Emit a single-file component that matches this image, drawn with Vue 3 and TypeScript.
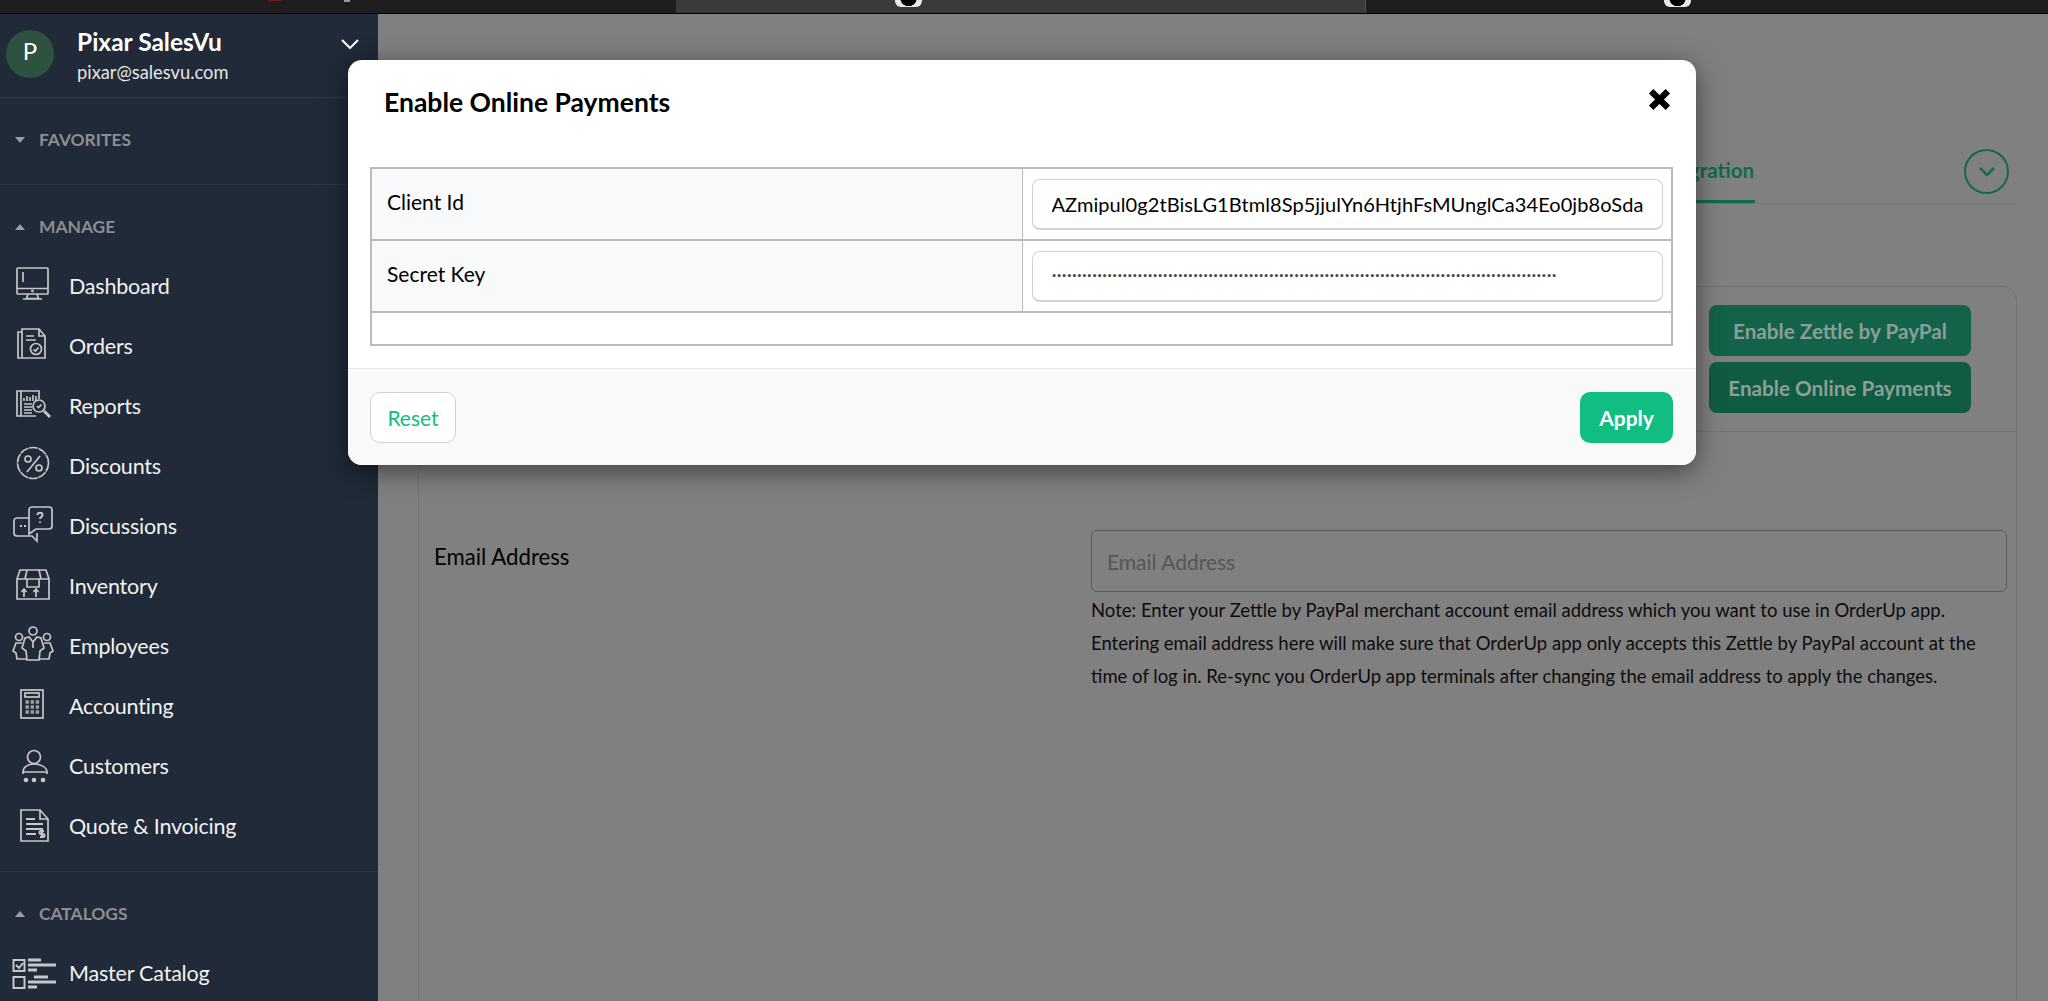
<script setup lang="ts">
interface MenuItem { label: string; svg: string }

const menu: MenuItem[] = [
  { label: 'Dashboard', svg: '<rect x="5" y="4" width="31" height="26" rx="1"/><path d="M5 24.5h31M11 8v10M16 30l-1.500 4.500h12L25 30M11 35h19"/><circle cx="20.500" cy="27" r=".6"/>' },
  { label: 'Orders', svg: '<path d="M10 5h17l6 7v22H10zM27 5v7h6M10 8H6v26l3 0M14 12h8M14 16h10"/><circle cx="24" cy="25" r="5.500"/><path d="M21.500 25.500l2 1.500 3-3.500"/>' },
  { label: 'Reports', svg: '<path d="M27 15V7H5v25h19"/><path d="M9 7v25M12 17v-3M15 17v-5M18 17v-4M21 17v-6M24 17v-5M12 20h8M12 23h8M12 26h8M12 29h8"/><circle cx="27" cy="22" r="6"/><path d="M25 22l1.500 1.500 3-3"/><path stroke-width="2.800" d="M32 27l6 6"/>' },
  { label: 'Discounts', svg: '<circle cx="21" cy="19" r="15.500" stroke-dasharray="9 .8"/><path d="M28 12L15 28"/><circle cx="16" cy="15" r="3"/><circle cx="27" cy="24" r="3"/>' },
  { label: 'Discussions', svg: '<path d="M20 3h17a3 3 0 0 1 3 3v16a3 3 0 0 1-3 3H24l-7 5V6a3 3 0 0 1 3-3z"/><path d="M17 14H5a3 3 0 0 0-3 3v12a3 3 0 0 0 3 3h15l5 5V29"/><path stroke-width="2" d="M25.500 11c0-3 5-3 5 0 0 2-2.500 2-2.500 4M28 17.500v1.500M8 22h2M12 22h2"/>' },
  { label: 'Inventory', svg: '<path d="M5 15L8 6h26l3 9v20H5zM5 15h32M15 6l-2 9M27 6l2 9M15 15v8h12v-8M12 33v-7M9.500 28l2.500-3 2.500 3M24 33v-7M21.500 28l2.500-3 2.500 3"/>' },
  { label: 'Employees', svg: '<circle cx="21" cy="7" r="4"/><circle cx="7" cy="13" r="3.500"/><circle cx="35" cy="13" r="3.500"/><path d="M13 14l4-1 4 5 4-5 4 1 3 10-4 3-1 9H15l-1-9-4-3zM21 18v6"/><path d="M10 19H4l-3 8 3 2 1 6h10M32 19h6l3 8-3 2-1 6H27"/>' },
  { label: 'Accounting', svg: '<rect x="9" y="6" width="22" height="28"/><rect x="13" y="9" width="14" height="4"/><path stroke-width="3.400" stroke-dasharray="3.400 1.700" d="M13.500 18h14M13.500 23h14M13.500 28h14" opacity=".75"/>' },
  { label: 'Customers', svg: '<circle cx="22" cy="13" r="6.500"/><path d="M11 28c0-5 5-8 11-8s13 3 13 8zM11 28v2M35 28v2"/><circle cx="14" cy="36" r="1.500" fill="#c9ccd0"/><circle cx="22" cy="36" r="1.500" fill="#c9ccd0"/><circle cx="31" cy="36" r="1.500" fill="#c9ccd0"/>' },
  { label: 'Quote & Invoicing', svg: '<path d="M9 6h19l8 9v22H9zM28 6v9h8"/><path stroke-width="2" d="M14 15h9M14 20h17M14 25h17M14 30h10M30 28v6M28 33h3a1 1 0 0 0 0-3h-2a1 1 0 0 1 0-3h3"/>' },
]

const catalogSvg = '<path stroke-width="2" d="M1.500 9h11v11h-11zM1.500 26h11v11h-11zM4 14l3 3 4-5"/><path stroke-width="3" d="M16 9h13M16 14h28M16 19h9M22 26h14M16 31h28M16 36h9"/>'

const clientId = 'AZmipul0g2tBisLG1Btml8Sp5jjulYn6HtjhFsMUnglCa34Eo0jb8oSda'
const secret = '·'.repeat(100)
</script>

<template>
  <div class="page">
    <header class="browser">
      <div class="browser-tab browser-tab--active"><span class="favicon"></span></div>
      <div class="browser-tab browser-tab--last"><span class="favicon"></span></div>
    </header>

    <div class="app">
      <aside class="sidebar">
        <div class="profile">
          <div class="avatar">P</div>
          <div class="who">
            <div class="name">Pixar SalesVu</div>
            <div class="email">pixar@salesvu.com</div>
          </div>
          <svg class="chevron" width="18" height="12" viewBox="0 0 18 12"><path d="M1 2l8 8 8-8" /></svg>
        </div>

        <section class="group group--fav">
          <h3 class="group-title"><i class="caret caret--down"></i>FAVORITES</h3>
        </section>

        <section class="group group--manage">
          <h3 class="group-title"><i class="caret"></i>MANAGE</h3>
          <ul class="menu">
            <li v-for="item in menu" :key="item.label" class="menu-item">
              <svg class="icon" width="44" height="44" viewBox="0 0 44 44" v-html="item.svg"></svg>
              <span>{{ item.label }}</span>
            </li>
          </ul>
        </section>

        <section class="group group--catalogs">
          <h3 class="group-title"><i class="caret"></i>CATALOGS</h3>
          <ul class="menu">
            <li class="menu-item">
              <svg class="icon" width="44" height="44" viewBox="0 0 44 44" v-html="catalogSvg"></svg>
              <span>Master Catalog</span>
            </li>
          </ul>
        </section>
      </aside>

      <main class="main">
        <div class="tabs">
          <div class="tab">Zettle by PayPal Integration</div>
          <button class="round" type="button" aria-label="More">
            <svg width="20" height="12" viewBox="0 0 20 12"><path d="M3 2l7 7 7-7" /></svg>
          </button>
        </div>

        <div class="card">
          <div class="card-head">
            <button class="green green--light" type="button">Enable Zettle by PayPal</button>
            <button class="green" type="button">Enable Online Payments</button>
          </div>
          <div class="form-row">
            <label class="form-label">Email Address</label>
            <div class="form-field">
              <input class="email-input" type="text" placeholder="Email Address" />
              <p class="note">Note: Enter your Zettle by PayPal merchant account email address which you want to use in OrderUp app. Entering email address here will make sure that OrderUp app only accepts this Zettle by PayPal account at the time of log in. Re-sync you OrderUp app terminals after changing the email address to apply the changes.</p>
            </div>
          </div>
        </div>
      </main>

      <div class="modal" role="dialog">
        <div class="modal-head">
          <h2 class="modal-title">Enable Online Payments</h2>
          <svg class="close" width="25" height="25" viewBox="0 0 24 24"><path d="M4 4l16 16M20 4L4 20" /></svg>
        </div>
        <div class="modal-body">
          <table class="grid">
            <tbody>
              <tr class="row">
                <th>Client Id</th>
                <td><input class="field" type="text" :value="clientId" /></td>
              </tr>
              <tr class="row">
                <th>Secret Key</th>
                <td><input class="field field--secret" type="text" :value="secret" /></td>
              </tr>
              <tr class="row row--empty"><td colspan="2"></td></tr>
            </tbody>
          </table>
        </div>
        <div class="modal-foot">
          <button class="btn btn--reset" type="button">Reset</button>
          <button class="btn btn--apply" type="button">Apply</button>
        </div>
      </div>
    </div>
  </div>
</template>

<style>
html, body { margin: 0; background: #808080; overflow: hidden; }
</style>

<style scoped>
* { box-sizing: border-box; }
.page {
  width: 2048px;
  height: 1001px;
  overflow: hidden;
  display: flex;
  flex-direction: column;
  font-family: Lato, "Liberation Sans", sans-serif;
  color: #000;
}

.browser {
  flex: 0 0 14px;
  display: flex;
  padding-left: 676px;
  background:
    linear-gradient(#7a1c1c, #7a1c1c) 268px 0 / 13px 1px no-repeat,
    linear-gradient(#9a9a9a, #9a9a9a) 344px 0 / 6px 2px no-repeat,
    #1e1e1e;
  border-bottom: 1px solid #000;
  overflow: hidden;
}
.browser-tab {
  width: 690px;
  padding-left: 219px;
}
.browser-tab--active {
  background: #3a3a3a;
  border-right: 1px solid #555;
}
.browser-tab--last { padding-left: 298px; width: 682px; }
.favicon {
  display: block;
  width: 27px;
  height: 7px;
  background: radial-gradient(circle at 50% -2px, #000 8px, #e8e8e8 8.5px);
  border-radius: 0 0 6px 6px;
}

.app {
  position: relative;
  flex: 1;
  min-height: 0;
  display: flex;
}

/* sidebar */
.sidebar {
  flex: 0 0 378px;
  background: #202a38;
  color: #fff;
  overflow: hidden;
}
.profile {
  height: 84px;
  display: flex;
  align-items: flex-start;
  padding: 16px 19px 0 6px;
  border-bottom: 1px solid #2b3a49;
}
.avatar {
  flex: 0 0 48px;
  height: 48px;
  border-radius: 50%;
  background: #2d5240;
  text-align: center;
  font-size: 24px;
  line-height: 42px;
}
.who { flex: 1; padding-left: 23px; margin-top: -3px; }
.name { font-size: 24.500px; font-weight: 700; line-height: 30px; }
.email { font-size: 18.300px; line-height: 30px; color: #e6e6e6; }
.chevron { margin-top: 8px; }
.chevron path { fill: none; stroke: #fff; stroke-width: 2; }

.group { border-bottom: 1px solid #2b3a49; }
.group--fav { height: 87px; padding-top: 28px; }
.group--manage { padding: 28px 0 15px; }
.group--catalogs { padding-top: 28px; border-bottom: 0; }
.group-title {
  margin: 0;
  padding-left: 15px;
  display: flex;
  align-items: center;
  font-size: 17.400px;
  line-height: 28px;
  font-weight: 700;
  color: #8b8e92;
}
.caret {
  width: 0;
  height: 0;
  margin-right: 14px;
  border-left: 5.500px solid transparent;
  border-right: 5.500px solid transparent;
  border-bottom: 6px solid #9b9ea2;
}
.caret--down { border-bottom: 0; border-top: 6px solid #9b9ea2; }
.menu { list-style: none; margin: 15px 0 0; padding: 0; }
.menu-item {
  height: 60px;
  display: flex;
  align-items: center;
  gap: 13px;
  padding-left: 12px;
  font-size: 21.500px;
  letter-spacing: -0.2px;
  color: #f2f2f2;
}
.icon {
  flex: 0 0 44px;
  fill: none;
  stroke: #c4c7cb;
  stroke-width: 1.700;
}

/* page behind the dialog */
.main {
  flex: 1;
  min-width: 0;
  background: #808080;
  padding: 0 31px 0 40px;
}
.tabs {
  height: 190px;
  display: flex;
  align-items: flex-end;
  justify-content: flex-end;
  border-bottom: 1px solid #737373;
}
.tab {
  height: 54px;
  padding: 0 1px;
  font-size: 20.500px;
  font-weight: 700;
  line-height: 42px;
  color: #0f6a4c;
  border-bottom: 3px solid #0f6a4c;
}
.round {
  width: 45px;
  height: 45px;
  margin: 0 8px 9px 209px;
  padding: 0;
  border: 2.500px solid #12694c;
  border-radius: 50%;
  background: none;
  display: flex;
  align-items: center;
  justify-content: center;
}
.round path { fill: none; stroke: #12694c; stroke-width: 2.500; }
.card {
  margin-top: 82px;
  height: 900px;
  border: 1px solid #737373;
  border-radius: 14px;
}
.card-head {
  height: 145px;
  padding: 18px 45px 0 0;
  display: flex;
  flex-direction: column;
  align-items: flex-end;
  gap: 6px;
  border-bottom: 1px solid #737373;
}
.green {
  width: 262px;
  height: 51px;
  border: 0;
  border-radius: 8px;
  background: #105c42;
  color: #8f9f97;
  font: 700 20.700px Lato, "Liberation Sans", sans-serif;
}
.green--light { background: #126349; color: #8c9e95; }
.form-row {
  display: flex;
  padding: 98px 9px 0 15px;
}
.form-label {
  flex: 0 0 657px;
  font-size: 22.200px;
  line-height: 54px;
}
.form-field { flex: 1; }
.email-input {
  width: 100%;
  height: 62px;
  padding: 0 15px;
  border: 1px solid #585858;
  border-radius: 6px;
  background: transparent;
  font: 21px Lato, "Liberation Sans", sans-serif;
}
.email-input::placeholder { color: #565656; opacity: 1; }
.note {
  margin: 2px 0 0;
  font-size: 18.500px;
  line-height: 33px;
  color: #0c0c0c;
}

/* dialog */
.modal {
  position: absolute;
  left: 348px;
  top: 46px;
  width: 1348px;
  height: 405px;
  display: flex;
  flex-direction: column;
  background: #fff;
  border-radius: 14px;
  box-shadow: 0 6px 26px rgba(0, 0, 0, 0.5);
}
.modal-head {
  height: 107px;
  display: flex;
  justify-content: space-between;
  align-items: flex-start;
  padding: 23px 24px 0 36px;
}
.modal-title {
  margin: 0;
  font-size: 26.500px;
  line-height: 38px;
  font-weight: 700;
}
.close { margin-top: 4px; }
.close path { fill: none; stroke: #000; stroke-width: 6; }
.modal-body { flex: 1; padding: 0 23px 0 22px; }
.grid {
  width: 100%;
  border-collapse: collapse;
  table-layout: fixed;
  border: 2px solid #b8bbc0;
}
.row { height: 72px; border-bottom: 2px solid #b8bbc0; }
.row th {
  width: 651px;
  padding: 0 15px 6px;
  background: #f8f9fb;
  border-right: 1px solid #b8bbc0;
  text-align: left;
  font-size: 21px;
  font-weight: 400;
}
.row td { padding: 0 8px 0 9px; }
.row--empty { height: 33px; border-bottom: 0; }
.field {
  display: block;
  width: 100%;
  height: 51px;
  padding: 0 19px;
  border: 1px solid #d2d2d2;
  border-bottom-width: 2px;
  border-radius: 8px;
  background: #fff;
  font: 20px Lato, "Liberation Sans", sans-serif;
  letter-spacing: 0.07px;
  color: #000;
  outline: 0;
}
.field--secret { padding-bottom: 6px; letter-spacing: -0.15px; color: #444; }
.modal-foot {
  height: 97px;
  display: flex;
  justify-content: space-between;
  padding: 23px 23px 0 22px;
  background: #f9f9f9;
  border-top: 1px solid #e8e8e8;
  border-radius: 0 0 14px 14px;
}
.btn {
  height: 51px;
  border-radius: 10px;
  font: 21px Lato, "Liberation Sans", sans-serif;
}
.btn--reset {
  width: 86px;
  background: #fff;
  border: 1.500px solid #d2d2d2;
  color: #12bd82;
}
.btn--apply {
  width: 93px;
  background: #12bd82;
  border: 0;
  color: #fff;
  font-weight: 700;
}
</style>
